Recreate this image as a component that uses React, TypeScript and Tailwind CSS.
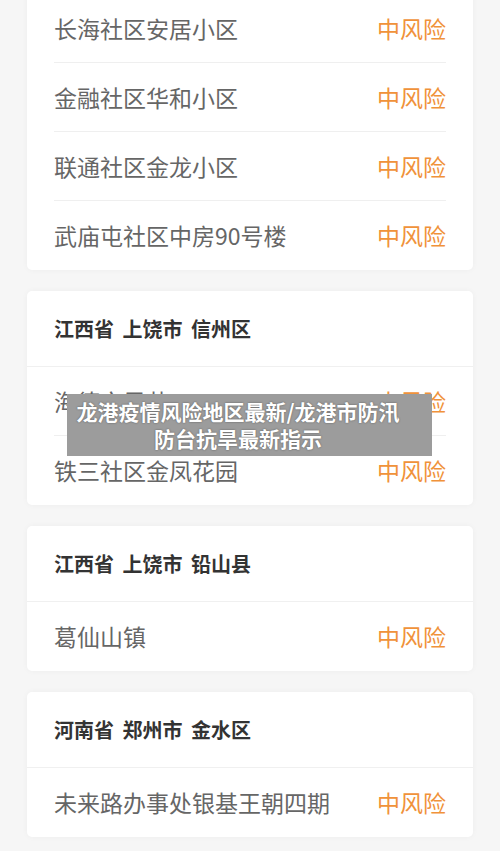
import React from "react";

const font = { fontFamily: '"Noto Sans CJK SC", "Noto Sans", sans-serif' };

type Card = { header?: string; rows: string[]; first?: boolean };

const cards: Card[] = [
  { rows: ["长海社区安居小区", "金融社区华和小区", "联通社区金龙小区", "武庙屯社区中房90号楼"], first: true },
  { header: "江西省 上饶市 信州区", rows: ["海德文昇苑", "铁三社区金凤花园"] },
  { header: "江西省 上饶市 铅山县", rows: ["葛仙山镇"] },
  { header: "河南省 郑州市 金水区", rows: ["未来路办事处银基王朝四期"] },
];

export default function App() {
  return (
    <div
      className="relative w-[500px] h-[851px] overflow-hidden bg-[#f6f6f6]"
      style={font}
    >
      <div className="flex flex-col gap-[21px] px-[27px] mt-[-6px]">
        {cards.map((c, i) => (
          <div
            key={i}
            className={`bg-white shadow-[0_0_6px_rgba(0,0,0,0.04)] ${c.first ? "rounded-b-[5px]" : "rounded-[5px]"}`}
          >
            {c.header && (
              <div className="h-[76px] flex items-center px-[27px] border-b border-[#f0f0f0] text-[20px] font-bold text-[#333333] [word-spacing:4px]">
                {c.header}
              </div>
            )}
            {c.rows.map((r, j) => (
              <div key={j} className="px-[27px]">
                <div
                  className={`h-[69px] flex items-center justify-between ${j < c.rows.length - 1 ? "border-b border-[#efefef]" : ""}`}
                >
                  <span className="text-[23px] text-[#666666]">{r}</span>
                  <span className="text-[23px] text-[#f0923a]">中风险</span>
                </div>
              </div>
            ))}
          </div>
        ))}
      </div>
      <div className="absolute left-[67px] top-[394px] w-[365px] h-[62px] bg-[#9c9c9c] pl-[9px] pr-[32px] flex items-center">
        <div className="w-full text-center text-white font-bold text-[21px] leading-[27px] [text-shadow:0_0_2px_rgba(0,0,0,0.45)]">
          龙港疫情风险地区最新/龙港市防汛
          <br />
          防台抗旱最新指示
        </div>
      </div>
    </div>
  );
}
